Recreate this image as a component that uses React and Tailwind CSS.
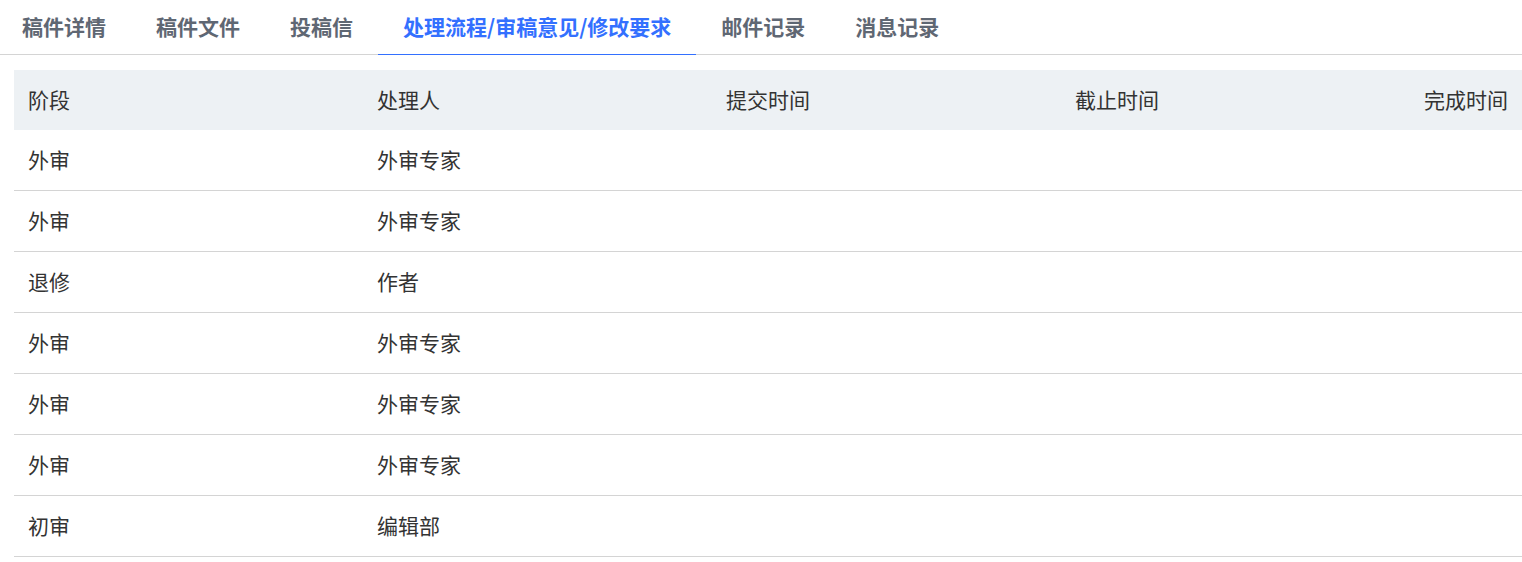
import React, { useState } from 'react';

const TABS = ['稿件详情', '稿件文件', '投稿信', '处理流程/审稿意见/修改要求', '邮件记录', '消息记录'];

const ROWS = [
    { stage: '外审', handler: '外审专家' },
    { stage: '外审', handler: '外审专家' },
    { stage: '退修', handler: '作者' },
    { stage: '外审', handler: '外审专家' },
    { stage: '外审', handler: '外审专家' },
    { stage: '外审', handler: '外审专家' },
    { stage: '初审', handler: '编辑部' },
];

const FONT = { fontFamily: '"Noto Sans CJK SC", "Noto Sans", sans-serif' };

function App() {
    const [active, setActive] = useState(3);

    return (
        <div className="bg-white w-[1522px] h-[562px] overflow-hidden text-[#333]" style={FONT}>
            {/* Tabs */}
            <div className="flex h-[55px] border-b border-[#d4d4d4]">
                {TABS.map((tab, i) => (
                    <button
                        key={tab}
                        onClick={() => setActive(i)}
                        className={
                            'h-[55px] -mb-px px-[25px] first:pl-[22px] text-[21px] font-bold leading-none pb-[2px] border-b ' +
                            (i === active ? 'text-[#3370ff] border-[#3370ff]' : 'text-[#5f6773] border-transparent')
                        }
                    >
                        {tab}
                    </button>
                ))}
            </div>

            {/* Table */}
            <div className="ml-[14px] mt-[15px] text-[21px]">
                <div className="grid grid-cols-[349px_349px_349px_349px_1fr] h-[60px] items-center bg-[#edf1f4] px-[14px]">
                    <span>阶段</span>
                    <span>处理人</span>
                    <span>提交时间</span>
                    <span>截止时间</span>
                    <span className="text-right">完成时间</span>
                </div>
                {ROWS.map((row, i) => (
                    <div key={i} className="grid grid-cols-[349px_349px_349px_349px_1fr] h-[61px] items-center border-b border-[#d4d4d4] px-[14px]">
                        <span>{row.stage}</span>
                        <span>{row.handler}</span>
                        <span></span>
                        <span></span>
                        <span></span>
                    </div>
                ))}
            </div>
        </div>
    );
}

export default App;
